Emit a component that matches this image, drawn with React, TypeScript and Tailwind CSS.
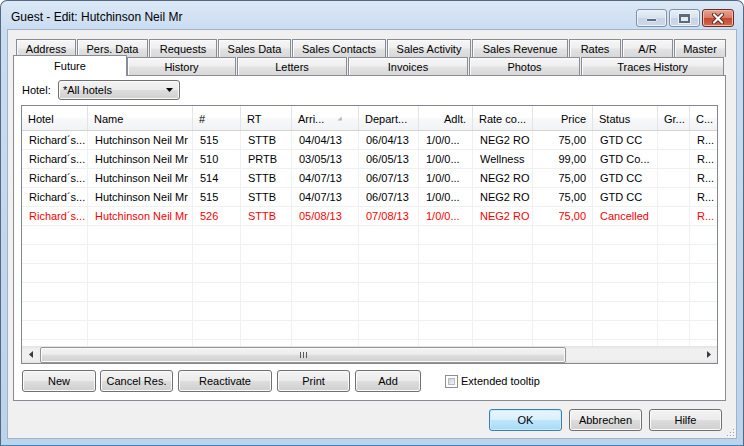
import React from 'react';

const FONT = "font-['Liberation_Sans',Arial,sans-serif]";
const BTN_BG = 'bg-[linear-gradient(180deg,#f3f3f3_0%,#ebebeb_48%,#dddddd_52%,#cfcfcf_100%)]';
const TAB_BG = 'bg-[linear-gradient(180deg,#f6f6f6_0%,#efefef_45%,#e2e2e2_55%,#d8d8d8_100%)]';

const row1 = [
  { t: 'Address', w: 'w-[60px]' },
  { t: 'Pers. Data', w: 'w-[71px]' },
  { t: 'Requests', w: 'w-[68px]' },
  { t: 'Sales Data', w: 'w-[73px]' },
  { t: 'Sales Contacts', w: 'w-[94px]' },
  { t: 'Sales Activity', w: 'w-[84px]' },
  { t: 'Sales Revenue', w: 'w-[96px]' },
  { t: 'Rates', w: 'w-[52px]' },
  { t: 'A/R', w: 'w-[51px]' },
  { t: 'Master', w: 'w-[52px]' },
];

const row2 = [
  { t: 'History', w: 'w-[109px]' },
  { t: 'Letters', w: 'w-[110px]' },
  { t: 'Invoices', w: 'w-[120px]' },
  { t: 'Photos', w: 'w-[111px]' },
  { t: 'Traces History', w: 'w-[143px]' },
];

const cols = [
  { l: 'Hotel', w: 'w-[66px]', r: false },
  { l: 'Name', w: 'w-[105px]', r: false },
  { l: '#', w: 'w-[48px]', r: false },
  { l: 'RT', w: 'w-[51px]', r: false },
  { l: 'Arri...', w: 'w-[67px]', r: false, sort: true },
  { l: 'Depart...', w: 'w-[60px]', r: false },
  { l: 'Adlt.', w: 'w-[54px]', r: true },
  { l: 'Rate co...', w: 'w-[60px]', r: false },
  { l: 'Price', w: 'w-[60px]', r: true },
  { l: 'Status', w: 'w-[65px]', r: false },
  { l: 'Gr...', w: 'w-[32px]', r: false },
  { l: 'C...', w: 'w-[27px]', r: false },
];

const rows: { c: string[]; red?: boolean }[] = [
  { c: ['Richard´s...', 'Hutchinson Neil Mr', '515', 'STTB', '04/04/13', '06/04/13', '1/0/0...', 'NEG2 RO', '75,00', 'GTD CC', '', 'R...'] },
  { c: ['Richard´s...', 'Hutchinson Neil Mr', '510', 'PRTB', '03/05/13', '06/05/13', '1/0/0...', 'Wellness', '99,00', 'GTD Co...', '', 'R...'] },
  { c: ['Richard´s...', 'Hutchinson Neil Mr', '514', 'STTB', '04/07/13', '06/07/13', '1/0/0...', 'NEG2 RO', '75,00', 'GTD CC', '', 'R...'] },
  { c: ['Richard´s...', 'Hutchinson Neil Mr', '515', 'STTB', '04/07/13', '06/07/13', '1/0/0...', 'NEG2 RO', '75,00', 'GTD CC', '', 'R...'] },
  { c: ['Richard´s...', 'Hutchinson Neil Mr', '526', 'STTB', '05/08/13', '07/08/13', '1/0/0...', 'NEG2 RO', '75,00', 'Cancelled', '', 'R...'], red: true },
];

const empty = Array.from({ length: 7 }, () => ({ c: Array(12).fill(''), red: false }));

function Btn({ w, children, def }: { w: string; children: React.ReactNode; def?: boolean }) {
  return (
    <div
      className={`${w} h-[22px] flex items-center justify-center rounded-[3px] border ${
        def
          ? 'border-[#3c7fb1] bg-[linear-gradient(180deg,#eaf6fd_0%,#d9f0fc_48%,#bee6fd_52%,#a7d9f5_100%)] shadow-[inset_0_0_0_1px_#c7ecfd]'
          : `border-[#707070] ${BTN_BG} shadow-[inset_0_0_0_1px_#fbfbfb]`
      } text-[11px] text-black leading-none`}
    >
      {children}
    </div>
  );
}

export default function App() {
  return (
    <div className={`${FONT} w-[744px] h-[446px] overflow-hidden rounded-t-[7px] border border-[#56687c] border-b-[#3a86b5] bg-[linear-gradient(180deg,#dce8f5_0px,#c9dcf1_30px,#bcd3ec_100%)] select-none`}>
      {/* Title bar */}
      <div className="h-[29px] flex items-start">
        <div className="pl-[10px] pt-[8px] text-[12px] text-black leading-[16px]">Guest - Edit: Hutchinson Neil Mr</div>
        <div className="ml-auto mr-[9px] mt-[8px] flex gap-[2px]">
          <div className="w-[31px] h-[18px] rounded-[3px] border border-[#7f91a8] bg-[linear-gradient(180deg,#e8eef6_0%,#d7e2ef_50%,#c6d4e6_52%,#cbd9ea_100%)] shadow-[inset_0_0_0_1px_#eef3f9] flex items-end justify-center pb-[4px]">
            <div className="w-[11px] h-[4px] bg-[#5e6f82] border border-[#dfe6ee] rounded-[1px]" />
          </div>
          <div className="w-[31px] h-[18px] rounded-[3px] border border-[#7f91a8] bg-[linear-gradient(180deg,#e8eef6_0%,#d7e2ef_50%,#c6d4e6_52%,#cbd9ea_100%)] shadow-[inset_0_0_0_1px_#eef3f9] flex items-center justify-center">
            <div className="w-[11px] h-[9px] border-[2px] border-t-[3px] border-[#5a6b7e] bg-[#e4ebf3] shadow-[0_0_0_1px_#eef2f7]" />
          </div>
          <div className="w-[32px] h-[18px] rounded-[3px] border border-[#6b2a22] bg-[linear-gradient(180deg,#e8a493_0%,#d97b66_48%,#c8462e_52%,#d06b4d_100%)] shadow-[inset_0_0_0_1px_#eebbad] flex items-center justify-center">
            <svg width="14" height="11" viewBox="0 0 14 11">
              <path d="M3 1.5 L11 9.5 M11 1.5 L3 9.5" stroke="#5a2a22" strokeWidth="4" strokeLinecap="round" />
              <path d="M3 1.5 L11 9.5 M11 1.5 L3 9.5" stroke="#ffffff" strokeWidth="2.2" strokeLinecap="round" />
            </svg>
          </div>
        </div>
      </div>

      {/* Client area */}
      <div className="ml-[7px] w-[728px] h-[408px] bg-[#f0f0f0] shadow-[0_0_0_1px_#9fb3c9] flex flex-col relative">
        {/* Tab row 1 */}
        <div className="flex ml-[8px] mt-[9px] h-[18px]">
          {row1.map((t, i) => (
            <div
              key={t.t}
              className={`${t.w} ${i < row1.length - 1 ? 'mr-px' : ''} h-[18px] border border-b-0 border-[#898c95] ${TAB_BG} shadow-[inset_1px_1px_0_#fbfbfb] flex items-center justify-center pt-[1px] text-[11px] text-black leading-none`}
            >
              {t.t}
            </div>
          ))}
        </div>
        {/* Tab row 2 */}
        <div className="flex items-end ml-[5px] mt-[-2px] mb-[-1px] h-[21px] relative z-10">
          <div className="w-[114px] h-[21px] border border-b-0 border-[#898c95] bg-white flex items-center justify-center text-[11px] text-black leading-none">
            Future
          </div>
          {row2.map((t, i) => (
            <div
              key={t.t}
              className={`${t.w} ${i < row2.length - 1 ? 'mr-px' : ''} h-[18px] mb-px border border-b-0 border-[#898c95] ${TAB_BG} shadow-[inset_1px_1px_0_#fbfbfb] flex items-center justify-center pt-[1px] text-[11px] text-black leading-none`}
            >
              {t.t}
            </div>
          ))}
        </div>

        {/* Tab page */}
        <div className="ml-[5px] w-[713px] h-[326px] border border-[#898c95] bg-white flex flex-col">
          {/* Hotel selector */}
          <div className="mt-[4px] ml-[8px] h-[20px] flex items-center">
            <div className="w-[36px] text-[11px] text-black leading-none">Hotel:</div>
            <div className={`w-[122px] h-[20px] rounded-[3px] border border-[#707070] ${BTN_BG} shadow-[inset_0_0_0_1px_#fbfbfb] flex items-center pl-[4px] pr-[6px] text-[11px] text-black leading-none`}>
              <span>*All hotels</span>
              <svg className="ml-auto" width="7" height="4" viewBox="0 0 7 4">
                <path d="M0 0 H7 L3.5 4 Z" fill="#000" />
              </svg>
            </div>
          </div>

          {/* Grid */}
          <div className="mt-[5px] ml-[7px] w-[697px] h-[259px] border border-[#828790] flex flex-col bg-white">
            {/* Header */}
            <div className="h-[25px] flex border-b border-[#d5d5d5] bg-[linear-gradient(180deg,#ffffff_0%,#ffffff_50%,#f7f8f9_51%,#f2f3f4_100%)]">
              {cols.map((c, i) => (
                <div
                  key={i}
                  className={`${c.w} h-full flex items-center pt-[2px] ${c.r ? 'justify-end pr-[6px]' : 'pl-[6px]'} ${i < cols.length - 1 ? 'border-r border-[#e3e4e6]' : ''} text-[11px] text-black leading-none relative`}
                >
                  <span>{c.l}</span>
                  {c.sort && (
                    <svg className="ml-[13px] mb-[1px]" width="6" height="5" viewBox="0 0 6 5">
                      <path d="M0.5 4.5 L4.5 0.5 L5 4.5 Z" fill="#b5b9c0" />
                    </svg>
                  )}
                </div>
              ))}
            </div>
            {/* Rows */}
            <div className="flex-1 overflow-hidden">
              {[...rows, ...empty].map((r, ri) => (
                <div key={ri} className="h-[19px] flex border-b border-[#f0f0f0]">
                  {r.c.map((v, ci) => (
                    <div
                      key={ci}
                      className={`${cols[ci].w} h-full flex items-center pt-px ${ci === 8 ? 'justify-end pr-[6px]' : 'pl-[7px]'} ${ci < cols.length - 1 ? 'border-r border-[#f0f0f0]' : ''} text-[11px] leading-none whitespace-nowrap overflow-hidden ${r.red ? 'text-[#ff0000]' : 'text-black'}`}
                    >
                      {v}
                    </div>
                  ))}
                </div>
              ))}
            </div>
            {/* Horizontal scrollbar */}
            <div className="h-[17px] flex items-center bg-[linear-gradient(180deg,#e3e3e3_0%,#f0f0f0_20%,#f0f0f0_80%,#e3e3e3_100%)]">
              <div className="w-[17px] h-full flex items-center justify-center">
                <svg width="4" height="7" viewBox="0 0 4 7">
                  <path d="M4 0 V7 L0 3.5 Z" fill="#3c3c3c" />
                </svg>
              </div>
              <div className="w-[526px] h-[16px] ml-px rounded-[2px] border border-[#959595] bg-[linear-gradient(180deg,#f4f4f4_0%,#ececec_45%,#dcdcdc_55%,#d0d0d0_100%)] shadow-[inset_0_0_0_1px_#fafafa] flex items-center justify-center gap-[2px]">
                <div className="w-px h-[6px] bg-[#595959]" />
                <div className="w-px h-[6px] bg-[#595959]" />
                <div className="w-px h-[6px] bg-[#595959]" />
              </div>
              <div className="ml-auto w-[17px] h-full flex items-center justify-center">
                <svg width="4" height="7" viewBox="0 0 4 7">
                  <path d="M0 0 V7 L4 3.5 Z" fill="#3c3c3c" />
                </svg>
              </div>
            </div>
          </div>

          {/* Action buttons */}
          <div className="mt-[6px] ml-[8px] flex items-center">
            <Btn w="w-[74px]">New</Btn>
            <div className="w-[4px]" />
            <Btn w="w-[73px]">Cancel Res.</Btn>
            <div className="w-[5px]" />
            <Btn w="w-[94px]">Reactivate</Btn>
            <div className="w-[5px]" />
            <Btn w="w-[73px]">Print</Btn>
            <div className="w-[5px]" />
            <Btn w="w-[66px]">Add</Btn>
            <div className="ml-[24px] w-[13px] h-[13px] border border-[#8e8f8f] bg-white p-[2px]">
              <div className="w-full h-full bg-[linear-gradient(135deg,#cbcfd5_0%,#f6f6f6_100%)] border border-[#b5b9c0]" />
            </div>
            <span className="ml-[3px] text-[11px] text-black leading-none">Extended tooltip</span>
          </div>
        </div>

        {/* Dialog buttons */}
        <div className="mt-[8px] flex justify-end pr-[14px]">
          <Btn w="w-[73px]" def>OK</Btn>
          <div className="w-[7px]" />
          <Btn w="w-[73px]">Abbrechen</Btn>
          <div className="w-[7px]" />
          <Btn w="w-[73px]">Hilfe</Btn>
        </div>

        {/* Size grip */}
        <svg className="absolute right-[1px] bottom-[1px]" width="10" height="10" viewBox="0 0 10 10">
          {[[8, 2], [8, 5], [5, 5], [8, 8], [5, 8], [2, 8]].map(([x, y], i) => (
            <g key={i}>
              <rect x={x} y={y} width="1" height="1" fill="#a0a0a0" />
              <rect x={x + 1} y={y + 1} width="1" height="1" fill="#ffffff" />
            </g>
          ))}
        </svg>
      </div>
    </div>
  );
}
